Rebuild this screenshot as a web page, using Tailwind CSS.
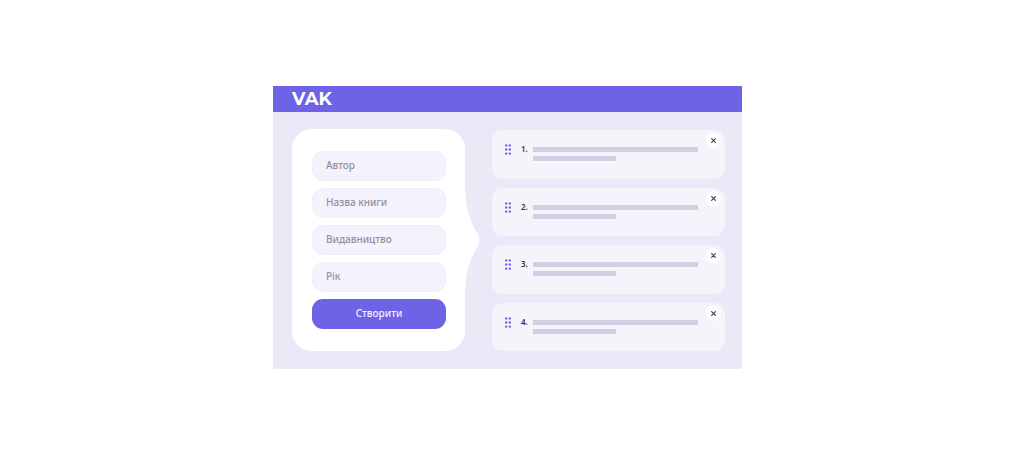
<!DOCTYPE html>
<html lang="uk">

<head>
    <meta charset="UTF-8">
    <meta name="viewport" content="width=device-width, initial-scale=1.0">
    <title>VAK</title>
    <script src="https://cdn.jsdelivr.net/npm/@tailwindcss/browser@4"></script>
</head>

<body class="bg-white font-['Noto_Sans',sans-serif]">
    <div class="flex min-h-screen items-center justify-center">
        <div class="w-full max-w-[469px] bg-[#ebe9f7]">
            <header class="flex h-[26px] items-center bg-[#6e62e5] px-[19px]">
                <h1 class="font-[Montserrat,'DejaVu_Sans',sans-serif] text-[18px] leading-none font-bold text-white">VAK</h1>
            </header>

            <main class="flex gap-[27px] pt-[17px] pr-[17px] pb-[18px] pl-[19px]">
                <!-- Form -->
                <form class="relative flex h-[222px] w-[173px] shrink-0 flex-col gap-[7px] rounded-[20px] bg-white pt-[22px] pr-[19px] pl-5">
                    <input type="text" aria-label="Автор" placeholder="Автор"
                        class="h-[30px] w-full rounded-[11px] border border-[#f0eef9] bg-[#f4f2fc] px-[13px] pb-[2px] text-[10px] font-medium text-[#5f5a6e] placeholder:text-[#928ea0] outline-none">
                    <input type="text" aria-label="Назва книги" placeholder="Назва книги"
                        class="h-[30px] w-full rounded-[11px] border border-[#f0eef9] bg-[#f4f2fc] px-[13px] pb-[2px] text-[10px] font-medium text-[#5f5a6e] placeholder:text-[#928ea0] outline-none">
                    <input type="text" aria-label="Видавництво" placeholder="Видавництво"
                        class="h-[30px] w-full rounded-[11px] border border-[#f0eef9] bg-[#f4f2fc] px-[13px] pb-[2px] text-[10px] font-medium text-[#5f5a6e] placeholder:text-[#928ea0] outline-none">
                    <input type="text" aria-label="Рік" placeholder="Рік"
                        class="h-[30px] w-full rounded-[11px] border border-[#f0eef9] bg-[#f4f2fc] px-[13px] pb-[2px] text-[10px] font-medium text-[#5f5a6e] placeholder:text-[#928ea0] outline-none">
                    <button type="button"
                        class="h-[30px] w-full rounded-[11px] bg-[#6e62e5] pb-[2px] text-[10px] font-medium text-[#f4f2fc]">Створити</button>

                    <svg class="absolute top-1/2 left-full -ml-px h-[110px] w-4 -translate-y-1/2" viewBox="0 0 16 110" fill="#fff">
                        <path d="M0 0H1C1 25 7 37 14 50C16 54 16 56 14 60C7 73 1 85 1 110H0Z" />
                    </svg>
                </form>

                <!-- Books -->
                <ol class="flex flex-1 flex-col gap-[9px] pt-px">
                    <li class="relative flex flex-1 rounded-[11px] bg-[#f5f4fb] pt-[14px] pl-[13px]">
                        <svg class="h-[11px] w-[6px] shrink-0" viewBox="0 0 6 11" fill="#6e62e5">
                            <circle cx="1.2" cy="1.4" r="1.2" /><circle cx="4.9" cy="1.4" r="1.2" />
                            <circle cx="1.2" cy="5.5" r="1.2" /><circle cx="4.9" cy="5.5" r="1.2" />
                            <circle cx="1.2" cy="9.6" r="1.2" /><circle cx="4.9" cy="9.6" r="1.2" />
                        </svg>
                        <span class="ml-[10px] w-3 text-[8px] leading-[10px] font-semibold text-[#333]">1.</span>
                        <div class="mr-[27px] flex-1 pt-[3px]">
                            <div class="h-[5px] bg-[#d2cee4]"></div>
                            <div class="mt-1 h-[5px] w-1/2 bg-[#d2cee4]"></div>
                        </div>
                        <button type="button" aria-label="Видалити"
                            class="absolute top-[3px] right-1 flex size-[15px] items-center justify-center rounded-full bg-white">
                            <svg class="size-[5px]" viewBox="0 0 5 5" fill="none" stroke="#3c3c55" stroke-width="1.1"><path d="M.3.3l4.4 4.4M4.7.3L.3 4.7" /></svg>
                        </button>
                    </li>
                    <li class="relative flex flex-1 rounded-[11px] bg-[#f5f4fb] pt-[14px] pl-[13px]">
                        <svg class="h-[11px] w-[6px] shrink-0" viewBox="0 0 6 11" fill="#6e62e5">
                            <circle cx="1.2" cy="1.4" r="1.2" /><circle cx="4.9" cy="1.4" r="1.2" />
                            <circle cx="1.2" cy="5.5" r="1.2" /><circle cx="4.9" cy="5.5" r="1.2" />
                            <circle cx="1.2" cy="9.6" r="1.2" /><circle cx="4.9" cy="9.6" r="1.2" />
                        </svg>
                        <span class="ml-[10px] w-3 text-[8px] leading-[10px] font-semibold text-[#333]">2.</span>
                        <div class="mr-[27px] flex-1 pt-[3px]">
                            <div class="h-[5px] bg-[#d2cee4]"></div>
                            <div class="mt-1 h-[5px] w-1/2 bg-[#d2cee4]"></div>
                        </div>
                        <button type="button" aria-label="Видалити"
                            class="absolute top-[3px] right-1 flex size-[15px] items-center justify-center rounded-full bg-white">
                            <svg class="size-[5px]" viewBox="0 0 5 5" fill="none" stroke="#3c3c55" stroke-width="1.1"><path d="M.3.3l4.4 4.4M4.7.3L.3 4.7" /></svg>
                        </button>
                    </li>
                    <li class="relative flex flex-1 rounded-[11px] bg-[#f5f4fb] pt-[14px] pl-[13px]">
                        <svg class="h-[11px] w-[6px] shrink-0" viewBox="0 0 6 11" fill="#6e62e5">
                            <circle cx="1.2" cy="1.4" r="1.2" /><circle cx="4.9" cy="1.4" r="1.2" />
                            <circle cx="1.2" cy="5.5" r="1.2" /><circle cx="4.9" cy="5.5" r="1.2" />
                            <circle cx="1.2" cy="9.6" r="1.2" /><circle cx="4.9" cy="9.6" r="1.2" />
                        </svg>
                        <span class="ml-[10px] w-3 text-[8px] leading-[10px] font-semibold text-[#333]">3.</span>
                        <div class="mr-[27px] flex-1 pt-[3px]">
                            <div class="h-[5px] bg-[#d2cee4]"></div>
                            <div class="mt-1 h-[5px] w-1/2 bg-[#d2cee4]"></div>
                        </div>
                        <button type="button" aria-label="Видалити"
                            class="absolute top-[3px] right-1 flex size-[15px] items-center justify-center rounded-full bg-white">
                            <svg class="size-[5px]" viewBox="0 0 5 5" fill="none" stroke="#3c3c55" stroke-width="1.1"><path d="M.3.3l4.4 4.4M4.7.3L.3 4.7" /></svg>
                        </button>
                    </li>
                    <li class="relative flex flex-1 rounded-[11px] bg-[#f5f4fb] pt-[14px] pl-[13px]">
                        <svg class="h-[11px] w-[6px] shrink-0" viewBox="0 0 6 11" fill="#6e62e5">
                            <circle cx="1.2" cy="1.4" r="1.2" /><circle cx="4.9" cy="1.4" r="1.2" />
                            <circle cx="1.2" cy="5.5" r="1.2" /><circle cx="4.9" cy="5.5" r="1.2" />
                            <circle cx="1.2" cy="9.6" r="1.2" /><circle cx="4.9" cy="9.6" r="1.2" />
                        </svg>
                        <span class="ml-[10px] w-3 text-[8px] leading-[10px] font-semibold text-[#333]">4.</span>
                        <div class="mr-[27px] flex-1 pt-[3px]">
                            <div class="h-[5px] bg-[#d2cee4]"></div>
                            <div class="mt-1 h-[5px] w-1/2 bg-[#d2cee4]"></div>
                        </div>
                        <button type="button" aria-label="Видалити"
                            class="absolute top-[3px] right-1 flex size-[15px] items-center justify-center rounded-full bg-white">
                            <svg class="size-[5px]" viewBox="0 0 5 5" fill="none" stroke="#3c3c55" stroke-width="1.1"><path d="M.3.3l4.4 4.4M4.7.3L.3 4.7" /></svg>
                        </button>
                    </li>
                </ol>
            </main>
        </div>
    </div>
</body>

</html>
